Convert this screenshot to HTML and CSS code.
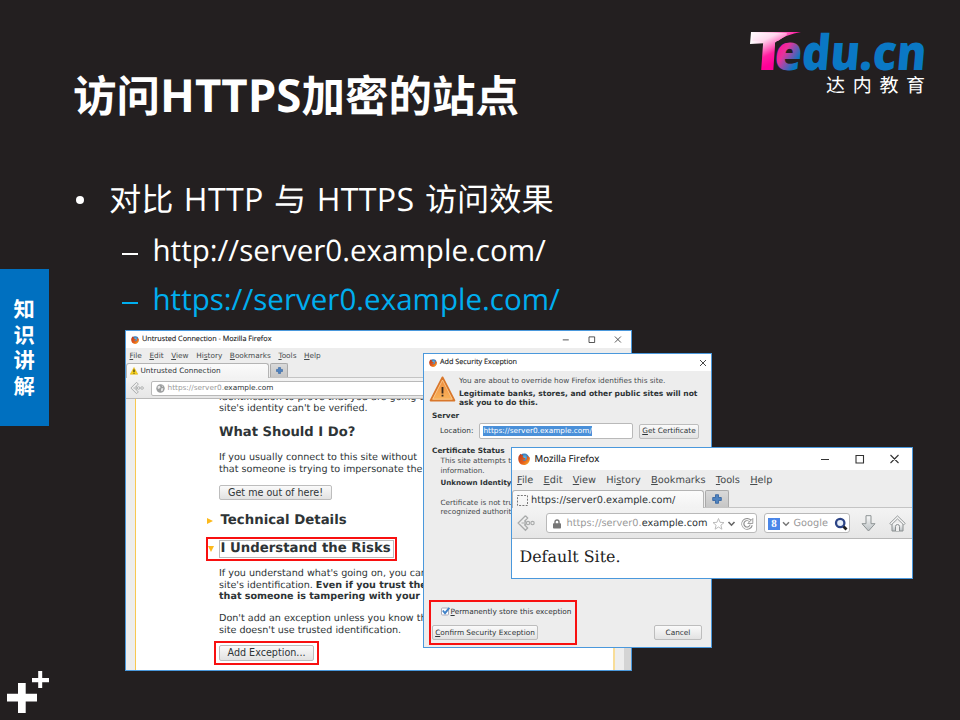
FILE: index.html
```html
<!DOCTYPE html>
<html lang="zh-CN">
<head>
<meta charset="utf-8">
<title>访问HTTPS加密的站点</title>
<link rel="stylesheet" href="styles.css">
</head>
<body>
<svg width="0" height="0" class="defs" aria-hidden="true">
  <defs>
    <radialGradient id="globe" cx=".55" cy=".4" r=".6"><stop offset="0" stop-color="#5fc0f0"/><stop offset="1" stop-color="#1d4f9c"/></radialGradient>
    <linearGradient id="fox" x1="0" y1="0" x2="1" y2="1"><stop offset="0" stop-color="#b5351c"/><stop offset=".6" stop-color="#e8601c"/><stop offset="1" stop-color="#fbc531"/></linearGradient>
    <linearGradient id="amber" x1="0" y1="0" x2="0" y2="1"><stop offset="0" stop-color="#ee8a3a"/><stop offset="1" stop-color="#f9b45c"/></linearGradient>
    <linearGradient id="steel" x1="0" y1="0" x2="0" y2="1"><stop offset="0" stop-color="#fafafa"/><stop offset="1" stop-color="#b9bfc2"/></linearGradient>
    <symbol id="firefox" viewBox="0 0 16 16">
      <circle cx="8.3" cy="7.3" r="6.6" fill="url(#globe)"/>
      <path d="M1 4C2 3 2.500 2 3 1c1 1 2 2 4 2-1 1-1 2 0 3 2 0 3 1 3 2-1 1-3 1-4 1 1 2 5 2 6-1 .6-2 0-3-1-5 3 2 4 4 4.500 2C17 11 13 16 8 16 2 16-1 10 1 4z" fill="url(#fox)"/>
    </symbol>
    <symbol id="back" viewBox="0 0 16 16">
      <path d="M7.500 1.500 1 8l6.500 6.500 2-2L6.500 9.300M6.500 6.700l3-3.200-2-2M6.500 6.700H8M6.500 9.300H8M4 8h4" fill="none" stroke="#a9abab" stroke-width="1.100"/>
      <circle cx="9.800" cy="8" r="1.500" fill="none" stroke="#a9abab"/><circle cx="13.800" cy="8" r="1.500" fill="none" stroke="#a9abab"/>
    </symbol>
    <symbol id="plus" viewBox="0 0 10 10">
      <path d="M3.500.7h3v2.800h2.800v3H6.500v2.800h-3V6.500H.7v-3h2.800z" fill="#4f83c0" stroke="#2f5f9e" stroke-width=".8" stroke-linejoin="round"/>
    </symbol>
    <symbol id="controls" viewBox="0 0 80 12">
      <path d="M1 6.500h8M36 2.500h7.500V10H36zM70.500 2l8 8M78.500 2l-8 8" fill="none" stroke="#333" stroke-width="1.100"/>
    </symbol>
  </defs>
</svg>

<div class="slide">
  <aside class="rail">
    <div class="rail-tab"><span>知</span><span>识</span><span>讲</span><span>解</span></div>
    <svg class="plus-mark" viewBox="0 0 42 42"><path d="M11 12h7.700v10.700H30v7.800H18.700V42H11V30.500H0v-7.800h11zM31.200 0h4v7H42v4.300h-6.800V17h-4v-5.700H25V7h6.200z" fill="#fff"/></svg>
  </aside>

  <main class="main">
    <header class="head">
      <h1>访问<span class="latin">HTTPS</span>加密的站点</h1>
      <svg class="logo" viewBox="0 0 184 72">
        <defs>
          <linearGradient id="pink" gradientUnits="userSpaceOnUse" x1="8" y1="6" x2="26" y2="40"><stop offset="0" stop-color="#fff"/><stop offset=".35" stop-color="#ffd8ee"/><stop offset=".75" stop-color="#ff1ea0"/><stop offset="1" stop-color="#ff0098"/></linearGradient>
          <linearGradient id="swoosh" x1="0" y1="0" x2="1" y2="0"><stop offset="0" stop-color="#fff"/><stop offset=".45" stop-color="#ffb4dc"/><stop offset="1" stop-color="#ff0098"/></linearGradient>
          <linearGradient id="blend" gradientUnits="userSpaceOnUse" x1="30" y1="26" x2="54" y2="38"><stop offset="0" stop-color="#ff1496"/><stop offset=".3" stop-color="#e8329c"/><stop offset=".9" stop-color="#0a78c4"/></linearGradient>
          <clipPath id="bar"><path d="M0 0H58L30 19V60H0z"/></clipPath>
        </defs>
        <path d="M6 8H56Q42 10 30 18.500L5 20z" fill="url(#swoosh)"/>
        <g clip-path="url(#bar)"><text class="brand" x="4" y="46" font-size="52" textLength="37" lengthAdjust="spacingAndGlyphs" fill="url(#pink)" transform="translate(3 0) skewX(-4)">T</text></g>
        <text class="brand" x="28.500" y="45.500" font-size="49" textLength="151.500" lengthAdjust="spacingAndGlyphs" fill="url(#blend)" transform="translate(4 0) skewX(-5)">edu.cn</text>
        <text class="brand-zh" x="81" y="67.500" font-size="19" letter-spacing="7.700" fill="#fff">达内教<tspan letter-spacing="0">育</tspan></text>
      </svg>
    </header>
    <ul class="points">
      <li class="lead"><i class="dot"></i>对比 <span class="latin">HTTP</span> 与 <span class="latin">HTTPS</span> 访问效果</li>
      <li class="sub"><i class="dash"></i>http://server0.example.com/</li>
      <li class="sub hot"><i class="dash"></i>https://server0.example.com/</li>
    </ul>
  </main>

  <section class="win untrusted">
    <div class="titlebar"><svg class="fx"><use href="#firefox"/></svg>Untrusted Connection - Mozilla Firefox<svg class="ctl"><use href="#controls"/></svg></div>
    <nav class="menu"><span><u>F</u>ile</span><span><u>E</u>dit</span><span><u>V</u>iew</span><span>Hi<u>s</u>tory</span><span><u>B</u>ookmarks</span><span><u>T</u>ools</span><span><u>H</u>elp</span></nav>
    <div class="tabs">
      <div class="tab"><svg class="tab-icon" viewBox="0 0 16 16"><path d="M8 1 15.500 14.500H.5z" fill="#f7d21c" stroke="#d9a800" stroke-linejoin="round"/><path d="M8 5v5M8 11.500v1.800" stroke="#111" stroke-width="2"/></svg>Untrusted Connection</div>
      <div class="newtab"><svg><use href="#plus"/></svg></div>
    </div>
    <div class="toolbar">
      <svg class="back"><use href="#back"/></svg>
      <div class="url"><svg class="world" viewBox="0 0 16 16"><circle cx="8" cy="8" r="7.500" fill="#9b9d9e"/><path d="M3 4l4-1 1 3-3 3-2-1zM9 8l4-1-1 5-3 1zM10 2l3 2-2 1z" fill="#e8e8e8"/></svg><span class="dim">https://server0.</span>example.com</div>
    </div>
    <div class="viewport">
      <div class="page">
        <p class="cut">identification to prove that you are going t<br>site's identity can't be verified.</p>
        <h2>What Should I Do?</h2>
        <p>If you usually connect to this site without<br>that someone is trying to impersonate the</p>
        <button class="out">Get me out of here!</button>
        <h3><i class="tri right"></i>Technical Details</h3>
        <div class="risks"><i class="tri down"></i><span>I Understand the Risks</span></div>
        <p>If you understand what's going on, you can<br>site's identification. <b>Even if you trust the</b><br><b>that someone is tampering with your</b></p>
        <p class="last">Don't add an exception unless you know th<br>site doesn't use trusted identification.</p>
        <div class="mark"><button>Add Exception...</button></div>
      </div>
      <div class="gutter"></div>
      <div class="scroll"></div>
    </div>
  </section>

  <section class="win dialog">
    <div class="titlebar"><svg class="fx"><use href="#firefox"/></svg>Add Security Exception<svg class="close" viewBox="0 0 8 8"><path d="M1 1l6 6M7 1 1 7" stroke="#333" stroke-width=".9"/></svg></div>
    <div class="dialog-body">
      <div class="warn">
        <svg viewBox="0 0 26 26"><path d="M13 1.500 24.800 24.500H1.200z" fill="url(#amber)" stroke="#d9772b" stroke-width="2" stroke-linejoin="round"/><path d="M13 4 22.800 23.200H3.200z" fill="none" stroke="#fbd09a" stroke-width=".8"/><path d="M13 11v6.500M13 18.700v1.900" stroke="#3b2a1c" stroke-width="1.800"/></svg>
        <div><p>You are about to override how Firefox identifies this site.</p><p class="legit">Legitimate banks, stores, and other public sites will not<br>ask you to do this.</p></div>
      </div>
      <h4>Server</h4>
      <div class="location"><label>Location:</label><div class="field"><mark>https://server0.example.com/</mark></div><button><u>G</u>et Certificate</button></div>
      <h4>Certificate Status</h4>
      <p class="note">This site attempts t<br>information.</p>
      <h5>Unknown Identity</h5>
      <p class="note">Certificate is not tru<br>recognized authorit</p>
      <div class="actions">
        <div class="confirm">
          <label class="check"><svg viewBox="0 0 9 9"><rect x=".5" y="1" width="7" height="7" rx="1" fill="#fff" stroke="#aab"/><path d="M1.800 3.500 4 6.200 8.300.8" fill="none" stroke="#3f82c8" stroke-width="1.900"/></svg><span><u>P</u>ermanently store this exception</span></label>
          <button><u>C</u>onfirm Security Exception</button>
        </div>
        <button class="cancel">Cancel</button>
      </div>
    </div>
  </section>

  <section class="win site">
    <div class="titlebar"><svg class="fx"><use href="#firefox"/></svg>Mozilla Firefox<svg class="ctl"><use href="#controls"/></svg></div>
    <nav class="menu"><span><u>F</u>ile</span><span><u>E</u>dit</span><span><u>V</u>iew</span><span>Hi<u>s</u>tory</span><span><u>B</u>ookmarks</span><span><u>T</u>ools</span><span><u>H</u>elp</span></nav>
    <div class="tabs">
      <div class="tab"><svg class="tab-icon" viewBox="0 0 11 11"><rect x=".5" y=".5" width="10" height="10" fill="none" stroke="#777" stroke-dasharray="2 1.300"/></svg>https://server0.example.com/</div>
      <div class="newtab"><svg><use href="#plus"/></svg></div>
    </div>
    <div class="toolbar">
      <svg class="back"><use href="#back"/></svg>
      <div class="url">
        <svg class="lock" viewBox="0 0 8 10"><path d="M2 5V3a2 2 0 0 1 4 0v2" fill="none" stroke="#777" stroke-width="1.400"/><rect y="4.300" width="8" height="5.200" rx=".8" fill="#777"/></svg><span class="dim">https://server0.</span>example.com
        <svg class="url-tools" viewBox="0 0 42 14"><path d="M6.500 1.500 8 5.300l4 .3-3.100 2.600 1 4-3.400-2.200-3.400 2.200 1-4L1 5.600l4-.3z" fill="#fff" stroke="#b5b5b5" stroke-width=".9"/><path d="M16.500 5l3 3.200 3-3.200" fill="none" stroke="#666" stroke-width="1.600"/><g fill="none"><path d="M38.600 4.200A4.300 4.300 0 1 0 39.300 8" stroke="#8c8c8c" stroke-width="3.200"/><path d="M38.400 4.400A4.300 4.300 0 1 0 39.100 7.900" stroke="#f6f6f6" stroke-width="1.400"/></g><path d="M40.800 1.500v5h-5z" fill="#f6f6f6" stroke="#8c8c8c" stroke-width=".8"/></svg>
      </div>
      <div class="search">
        <span class="g">8</span><svg class="caret" viewBox="0 0 8 6"><path d="M1 1.200l3 3 3-3" fill="none" stroke="#777" stroke-width="1.500"/></svg><span class="hint">Google</span><svg class="lens" viewBox="0 0 14 14"><circle cx="6.200" cy="6" r="4.200" fill="#e8f0fa" stroke="#2c4486" stroke-width="2.300"/><path d="M9.500 9.500l3 3" stroke="#222" stroke-width="2.800"/></svg>
      </div>
      <svg class="download" viewBox="0 0 15 17"><path d="M5 .7h5v8h4L7.500 16 1 8.700h4z" fill="url(#steel)" stroke="#8d9394" stroke-width="1" stroke-linejoin="round"/></svg>
      <svg class="home" viewBox="0 0 17 17"><path d="M3 8.500V16h11V8.500" fill="url(#steel)" stroke="#8a8f90"/><path d="M8.500.9.8 8.400l1.500 1.500 6.200-6 6.200 6 1.500-1.500z" fill="#f4f4f4" stroke="#8a8f90" stroke-width=".9"/><path d="M6.500 16v-4.500a2 2 0 0 1 4 0V16" fill="#eee" stroke="#8a8f90"/></svg>
    </div>
    <div class="document">Default Site.</div>
  </section>
</div>
</body>
</html>
```
FILE: styles.css
```css
* { box-sizing: border-box; }
body { margin: 0; background: #231f20; text-rendering: geometricPrecision; }
h1, h2, h3, h4, h5, p, ul { margin: 0; padding: 0; font-weight: inherit; }
svg { display: block; flex: none; }
.defs { position: absolute; }

.slide {
  position: relative;
  display: flex;
  width: 960px;
  height: 720px;
  overflow: hidden;
  background: #231f20;
  color: #fff;
  font-family: "Open Sans", "Noto Sans CJK SC", sans-serif;
}

.rail {
  display: flex;
  flex-direction: column;
  justify-content: space-between;
  width: 49px;
  padding: 269px 0 7px;
}
.rail-tab {
  display: grid;
  grid-auto-rows: 25.6px;
  height: 157px;
  padding: 27px 0 0 13.500px;
  background: #0070c0;
  font: bold 21.3px/25.6px "Noto Sans CJK SC", sans-serif;
}
.plus-mark { width: 42px; height: 42px; margin-left: 7px; }

.main { flex: 1; }
.head {
  display: flex;
  justify-content: space-between;
  height: 172px;
  padding: 24px 32px 0 24px;
}
h1 {
  padding-top: 38px;
  font: bold 43.5px/64px "Noto Sans CJK SC", sans-serif;
}
h1 .latin { font: bold 45.6px/1 "Open Sans", sans-serif; }
.logo { width: 184px; height: 72px; margin-right: -1px; overflow: visible; }
.brand { font-family: "Open Sans", sans-serif; font-weight: 800; }
.brand-zh { font-family: "Noto Sans CJK SC", sans-serif; }

.points { list-style: none; padding-left: 26px; }
.points li {
  display: flex;
  align-items: center;
  white-space: pre;
}
.points .lead {
  height: 54px;
  padding-top: 2px;
  font: 32.2px/52px "Open Sans", "Noto Sans CJK SC", sans-serif;
  word-spacing: 2.1px;
}
.lead .latin { letter-spacing: .3px; }
.dot { width: 8px; height: 8px; margin: 0 25px 0 1px; border-radius: 50%; background: currentColor; }
.points .sub { height: 49px; padding: 0 0 2px 47px; font-size: 29.55px; line-height: 47px; }
.dash { width: 16px; height: 2px; margin: 8px 14.500px 0 0; background: currentColor; }
.points .hot { color: #00aeef; }

/* windows stacked over the slide */
.win {
  position: absolute;
  display: flex;
  flex-direction: column;
  overflow: hidden;
  border: 1px solid #4a98dc;
  background: #ededed;
  color: #2e3436;
  font: 7.33px/1 "DejaVu Sans", sans-serif;
  white-space: nowrap;
}
.untrusted { left: 125px; top: 330px; width: 507px; height: 341px; }
.dialog { left: 423px; top: 353px; width: 289px; height: 295px; }
.site { left: 511px; top: 447px; width: 402px; height: 132px; font-size: 9.76px; }

.titlebar {
  display: flex;
  align-items: center;
  flex: none;
  height: 17px;
  padding-left: 5px;
  background: #fff;
  color: #111;
  font-family: "Open Sans", sans-serif;
  font-size: 7.24px;
  -webkit-text-stroke: .1px #111;
}
.fx { width: 8px; height: 8px; margin-right: 3px; }
.ctl { width: 60px; height: 9px; margin: 0 9px 0 auto; }
.close { width: 8px; height: 8px; margin: 0 4px 0 auto; }

.menu { display: flex; flex: none; align-items: center; height: 15px; padding-left: 3.500px; gap: 7.600px; color: #454a4c; }
u { text-decoration-thickness: .8px; text-underline-offset: 1px; }

.tabs { display: flex; flex: none; align-items: flex-end; height: 15px; border-bottom: 1px solid #c4c4c4; }
.tab {
  display: flex;
  align-items: center;
  width: 143px;
  height: 15px;
  margin-bottom: -1px;
  padding-left: 3px;
  border: 1px solid #b4b4b4;
  border-bottom: 0;
  border-radius: 3px 3px 0 0;
  background: linear-gradient(#fbfbfb, #f2f2f2);
}
.tab-icon { width: 8px; height: 8px; margin-right: 2.500px; }
.newtab {
  display: grid;
  place-items: center;
  width: 18px;
  height: 14px;
  margin-left: 1px;
  border: 1px solid #aaa;
  border-bottom: 0;
  border-radius: 2px 2px 0 0;
  background: linear-gradient(#d9d9d9, #c6c6c6);
}
.newtab svg { width: 7px; height: 7px; }

.toolbar {
  display: flex;
  flex: none;
  align-items: center;
  height: 21px;
  padding-left: 4px;
  border-bottom: 1px solid #b8b8b8;
  background: linear-gradient(#f3f3f3, #e6e6e6);
}
.back { width: 14px; height: 14px; }
.url {
  display: flex;
  flex: 1;
  align-items: center;
  height: 15px;
  margin-left: 7px;
  padding-left: 4px;
  border: 1px solid #b9b9b9;
  border-radius: 2px;
  background: #fff;
}
.dim { color: #999; }
.world { width: 9px; height: 9px; margin-right: 2.500px; }

.viewport { display: flex; flex: 1; min-height: 0; padding-left: 9px; }
.page {
  flex: 1;
  min-width: 0;
  padding-left: 83px;
  overflow: hidden;
  border-right: 2px solid #f8dd98;
  border-left: 1px solid #f8c850;
  background: #fff;
  font-size: 9.6px;
  line-height: 11.6px;
}
.gutter { width: 9px; }
.scroll { width: 7px; background: #d4d4d4; }
.page .cut { margin-top: -7.500px; }
.page h2 { margin: 9px 0 10.600px; font: bold 13.15px/18px "DejaVu Sans", sans-serif; }
.page h3 { display: flex; align-items: center; margin: 12.500px 0 8px -12px; font: bold 13.3px/16px "DejaVu Sans", sans-serif; }

button {
  padding: 0;
  border: 1px solid #bdbdbd;
  border-radius: 2px;
  background: linear-gradient(#fafafa, #e2e2e2);
  color: #2e3436;
  font: inherit;
  line-height: 1;
}
.page button { display: block; width: 95px; height: 16px; }
.page .out { width: 113px; height: 15px; margin-top: 10px; }

.tri { width: 6px; height: 6px; background: #fcb91c; }
.right { margin-right: 7.500px; clip-path: polygon(0 0, 100% 50%, 0 100%); }
.down { margin-right: 4.500px; clip-path: polygon(0 0, 100% 0, 50% 100%); }
.risks {
  display: flex;
  align-items: center;
  width: 191px;
  height: 24px;
  margin: 0 0 7px -13px;
  border: 2px solid #f81010;
  font: bold 13.25px/16px "DejaVu Sans", sans-serif;
}
.risks span { padding: 0 2px 0 1px; border: 1px solid #bbb; }
.page .last { margin-top: 10.200px; }
.mark { width: 105px; height: 24px; margin: 5px 0 0 -5px; padding: 2px 3px; border: 2px solid #f81010; }

.dialog-body { padding-left: 8px; }
.warn { display: flex; gap: 3px; margin-left: -3px; height: 40px; padding-top: 5.300px; line-height: 9.400px; color: #454a4c; }
.warn svg { width: 27px; height: 26px; }
.warn .legit { margin-top: 3px; font-weight: bold; font-size: 7.55px; color: #2e3436; }
h4 { font-weight: bold; line-height: 10px; }
h5 { margin: 3.300px 0 10.500px 8.500px; font-size: 7.1px; font-weight: bold; line-height: 9px; }
.note { margin-left: 8.500px; font-size: 7.25px; line-height: 9.500px; color: #454a4c; }
.location { display: flex; align-items: center; height: 16px; margin: 2px 0 7px 8px; }
.field { display: flex; align-items: center; width: 154px; height: 16px; margin: 0 6px 0 5.500px; padding-left: 3.500px; border: 1px solid #b9b9b9; border-radius: 2px; background: #fff; }
mark { background: #4a90d9; color: #fff; line-height: 10px; }
.location button { width: 60px; height: 15px; }
.actions { display: flex; align-items: flex-end; justify-content: space-between; margin: 83px 9px 0 -3px; }
.confirm { width: 148px; height: 45px; border: 2px solid #f81010; }
.check { display: flex; align-items: center; height: 19px; padding-left: 10px; }
.check svg { width: 9px; height: 9px; margin-right: .500px; }
.confirm button { display: block; width: 106px; height: 15px; margin: 4px 0 0 1px; }
.cancel { width: 48px; height: 15px; margin-bottom: 5px; }

.site .titlebar { height: 22px; padding-left: 6px; font-size: 9.64px; }
.site .fx { width: 12px; height: 12px; margin-right: 4.500px; }
.site .ctl { width: 80px; height: 12px; margin-right: 12px; }
.site .menu { height: 20px; padding: 1px 0 0 5px; gap: 10.250px; }
.site .tabs { height: 18px; }
.site .tab { width: 192px; height: 18px; padding: 2px 0 0 4px; }
.site .tab-icon { width: 11px; height: 11px; margin-right: 3px; }
.site .newtab { width: 24px; height: 17px; }
.site .newtab svg { width: 10px; height: 10px; }
.site .toolbar { height: 31px; padding-left: 5px; }
.site .back { width: 18px; height: 18px; }
.site .url { flex: none; width: 211px; height: 20px; margin-left: 11px; padding: 1px 0 0 6px; border-radius: 3px; }
.lock { width: 8px; height: 10px; margin-right: 5.500px; }
.url-tools { width: 42px; height: 14px; margin-left: 4px; }
.search { display: flex; align-items: center; width: 86px; height: 20px; margin-left: 7px; padding: 1px 0 0 3px; border: 1px solid #b9b9b9; border-radius: 3px; background: #fff; }
.g { width: 12px; height: 12px; background: #4a86e8; color: #fff; font: bold 11px/12px "Liberation Serif", serif; text-align: center; }
.caret { width: 8px; height: 6px; margin: 0 4px 0 1.500px; }
.hint { color: #999; }
.lens { width: 14px; height: 14px; margin-left: 6px; }
.download { width: 15px; height: 17px; margin: 0 13px 0 10.500px; }
.home { width: 17px; height: 17px; }
.document { flex: 1; padding-left: 7.500px; background: #fff; color: #222; font: 15.88px/36px "DejaVu Serif", serif; }
```
